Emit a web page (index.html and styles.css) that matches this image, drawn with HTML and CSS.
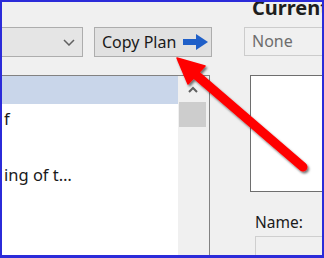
FILE: index.html
```html
<!DOCTYPE html>
<html lang="en">
<head>
<meta charset="UTF-8">
<title>Copy Plan</title>
<link rel="stylesheet" href="styles.css">
</head>

<body>

<div class="frame">

    <!-- LEFT: plan list -->
    <div class="left">
        <div class="toolbar">
            <div class="combo">
                <svg class="chev" width="12" height="7" viewBox="0 0 12 7"><path d="M1 1 L6 6 L11 1" fill="none" stroke="#606060" stroke-width="1.5"/></svg>
            </div>
            <button class="copy-btn">Copy Plan
                <svg width="25" height="16" viewBox="0 0 25 16"><path d="M0 5 H13 V0 L25 8 L13 16 V11 H0 Z" fill="#1f5fc8"/></svg>
            </button>
        </div>

        <div class="plan-list">
            <div class="items">
                <div class="row selected"></div>
                <div class="row">f</div>
                <div class="row"></div>
                <div class="row">ing of t…</div>
            </div>
            <div class="vscroll">
                <div class="up">
                    <svg width="10" height="7" viewBox="0 0 10 7"><path d="M1 6 L5 2 L9 6" fill="none" stroke="#606060" stroke-width="2"/></svg>
                </div>
                <div class="thumb"></div>
            </div>
        </div>
    </div>

    <!-- RIGHT: current plan -->
    <div class="right">
        <h2 class="current">Current Plan</h2>
        <div class="combo-none">None</div>
        <div class="preview"></div>
        <div class="name-label">Name:</div>
        <div class="name-box"></div>
    </div>

    <!-- callout arrow -->
    <svg class="callout" width="320" height="253" viewBox="2 2 320 253">
        <defs>
            <filter id="shadow" x="-20%" y="-20%" width="140%" height="140%">
                <feDropShadow dx="1.5" dy="2" stdDeviation="1.2" flood-color="#000" flood-opacity="0.55"/>
            </filter>
        </defs>
        <g filter="url(#shadow)" fill="#f00" stroke="#f00">
            <line x1="195" y1="74" x2="303" y2="167" stroke-width="9" stroke-linecap="round"/>
            <polygon points="177,58 205,66 188,84" stroke-width="1.5" stroke-linejoin="round"/>
        </g>
    </svg>

</div>

</body>
</html>
```

FILE: styles.css
```css
body {
    margin: 0;
    font-family: "Noto Sans", "Liberation Sans", sans-serif;
    color: #1a1a1a;
}

.frame {
    width: 324px;
    height: 258px;
    box-sizing: border-box;
    border: solid #2b2bd9;
    border-width: 2px 2px 3px 2px;
    background: #f0f0f0;
    display: flex;
    overflow: hidden;
    position: relative;
}

/* LEFT */
.left {
    width: 210px;
    flex-shrink: 0;
    padding-top: 25px;
    display: flex;
    flex-direction: column;
}

.toolbar {
    display: flex;
    gap: 11px;
    height: 30px;
}

.combo {
    width: 81px;
    box-sizing: border-box;
    background: #e5e5e5;
    border: 1px solid #adadad;
    border-left: none;
    display: flex;
    align-items: center;
    justify-content: flex-end;
    padding-right: 7px;
}

.copy-btn {
    width: 118px;
    height: 30px;
    box-sizing: border-box;
    background: #e1e1e1;
    border: 1px solid #adadad;
    font-family: inherit;
    font-size: 16px;
    color: #1a1a1a;
    display: flex;
    align-items: center;
    gap: 7px;
    padding: 0 0 0 7px;
}

.plan-list {
    margin-top: 18px;
    width: 207px;
    flex: 1;
    display: flex;
    border-top: 1px solid #828282;
    border-right: 1px solid #828282;
}

.items {
    width: 176px;
    background: white;
}

.row {
    height: 28px;
    box-sizing: border-box;
    padding: 2px 0 0 2px;
    line-height: 26px;
    font-size: 16.5px;
    white-space: nowrap;
}

.row.selected {
    background: #c9d6ea;
}

.vscroll {
    width: 30px;
    background: #f0f0f0;
}

.vscroll .up {
    height: 26px;
    display: flex;
    align-items: center;
    justify-content: center;
}

.vscroll .thumb {
    height: 25px;
    margin: 0 2px 0 1px;
    background: #cdcdcd;
}

/* RIGHT */
.right {
    margin-left: 32px;
    width: 120px;
    flex-shrink: 0;
}

.current {
    margin: -4px 0 0 0;
    padding-left: 8px;
    font-size: 20px;
    line-height: 20px;
    font-weight: bold;
    white-space: nowrap;
    color: #1e1e1e;
}

.combo-none {
    margin-top: 9px;
    height: 29px;
    box-sizing: border-box;
    border: 1px solid #cccccc;
    padding-left: 7px;
    line-height: 27px;
    font-size: 16px;
    color: #6d6d6d;
}

.preview {
    margin: 19px 0 0 6px;
    height: 117px;
    box-sizing: border-box;
    background: white;
    border: 1px solid #6e6e6e;
}

.name-label {
    margin: 20px 0 0 11px;
    font-size: 15.5px;
    line-height: 20px;
}

.name-box {
    margin: 4px 0 0 11px;
    height: 30px;
    border: 1px solid #cfcfcf;
}

/* CALLOUT */
.callout {
    position: absolute;
    top: 0;
    left: 0;
    pointer-events: none;
}
```
